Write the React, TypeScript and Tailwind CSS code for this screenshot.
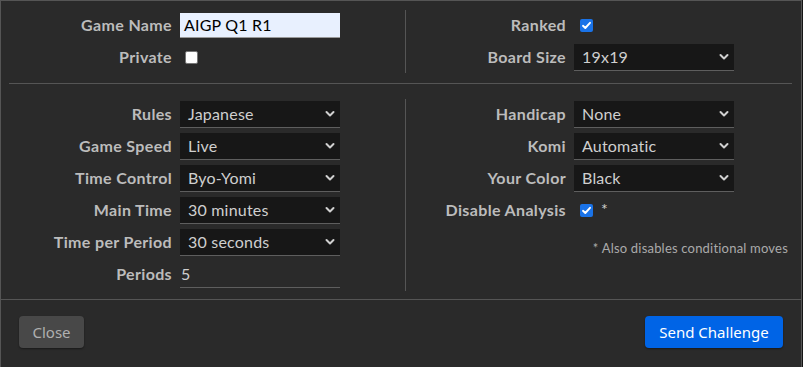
import React from "react";

const font = { fontFamily: "Lato, 'Noto Sans', sans-serif" };

function Chevron() {
  return (
    <svg width="10" height="7" viewBox="0 0 10 7" className="pointer-events-none absolute right-[5px] top-1/2 -translate-y-1/2">
      <path d="M1.5 1.5 L5 5 L8.5 1.5" fill="none" stroke="#d0d0d0" strokeWidth="2" strokeLinecap="round" strokeLinejoin="round" />
    </svg>
  );
}

function Select({ value }: { value: string }) {
  return (
    <div className="relative h-[27px] w-[160px] bg-[#171717] border-b border-[#5e5e5e] text-[16px] text-[#cfcfcf] pl-[8px] flex items-center tracking-[0.2px]">
      {value}
      <Chevron />
    </div>
  );
}

function Check({ checked }: { checked: boolean }) {
  if (!checked)
    return <div className="ml-[5px] w-[13px] h-[13px] rounded-[2px] bg-white border border-[#767676]" />;
  return (
    <div className="ml-[6px] w-[13px] h-[13px] rounded-[2px] bg-[#1a73e8] flex items-center justify-center">
      <svg width="11" height="11" viewBox="0 0 11 11">
        <path d="M2 5.8 L4.3 8 L9 2.8" fill="none" stroke="white" strokeWidth="1.9" strokeLinecap="round" strokeLinejoin="round" />
      </svg>
    </div>
  );
}

function Row({ label, lw, children }: { label: string; lw: string; children: React.ReactNode }) {
  return (
    <div className="h-[32px] flex items-center">
      <div className={`${lw} text-right font-bold text-[16px] text-[#bcbcbc] pr-[8px] whitespace-nowrap tracking-[0.35px]`}>{label}</div>
      {children}
    </div>
  );
}

export default function App() {
  return (
    <div className="w-[803px] h-[367px] bg-[#151515] overflow-hidden" style={font}>
      <div className="w-[802px] h-[367px] bg-[#2a2a2a] border-l border-t border-r border-[#555] flex flex-col">
        <div className="px-[8px] pt-[7px]">
          <div className="flex">
            <div className="w-[396px] py-[1px]">
              <Row label="Game Name" lw="w-[171px]">
                <div className="h-[25px] w-[160px] bg-[#e8f0fe] border-b border-[#999] text-[16px] text-black pl-[4px] flex items-center tracking-[0.2px]">AIGP Q1 R1</div>
              </Row>
              <Row label="Private" lw="w-[171px]">
                <Check checked={false} />
              </Row>
            </div>
            <div className="w-px bg-[#555] mt-[2px] mb-[1px]" />
            <div className="flex-1 py-[1px]">
              <Row label="Ranked" lw="w-[168px]">
                <Check checked={true} />
              </Row>
              <Row label="Board Size" lw="w-[168px]">
                <Select value="19x19" />
              </Row>
            </div>
          </div>
          <div className="h-px bg-[#555] mt-[9px] mr-[1px]" />
          <div className="flex mt-[14px]">
            <div className="w-[396px]">
              <Row label="Rules" lw="w-[171px]"><Select value="Japanese" /></Row>
              <Row label="Game Speed" lw="w-[171px]"><Select value="Live" /></Row>
              <Row label="Time Control" lw="w-[171px]"><Select value="Byo-Yomi" /></Row>
              <Row label="Main Time" lw="w-[171px]"><Select value="30 minutes" /></Row>
              <Row label="Time per Period" lw="w-[171px]"><Select value="30 seconds" /></Row>
              <Row label="Periods" lw="w-[171px]">
                <div className="h-[27px] w-[160px] border-b border-[#5e5e5e] text-[16px] text-[#cfcfcf] pl-[1px] flex items-center">5</div>
              </Row>
            </div>
            <div className="w-px bg-[#555] mt-[1px] mb-[-1px]" />
            <div className="flex-1">
              <Row label="Handicap" lw="w-[168px]"><Select value="None" /></Row>
              <Row label="Komi" lw="w-[168px]"><Select value="Automatic" /></Row>
              <Row label="Your Color" lw="w-[168px]"><Select value="Black" /></Row>
              <Row label="Disable Analysis" lw="w-[168px]">
                <Check checked={true} />
                <span className="ml-[8px] text-[16px] text-[#cfcfcf] -mt-[2px]">*</span>
              </Row>
              <div className="text-right text-[13px] text-[#aaaaaa] pr-[5px] mt-[13px] tracking-[0.2px]">* Also disables conditional moves</div>
            </div>
          </div>
        </div>
        <div className="h-px bg-[#555] mt-[9px]" />
        <div className="flex justify-between items-start px-[18px] pt-[16px]" style={{ fontFamily: "'Noto Sans', sans-serif" }}>
          <button className="h-[32px] w-[65px] rounded-[4px] bg-[#484848] text-[#b0b0b0] text-[15px] shadow-[0_1px_2px_rgba(0,0,0,0.4)]">Close</button>
          <button className="h-[32px] w-[138px] rounded-[4px] bg-[#0064e6] text-white text-[15px] shadow-[0_1px_2px_rgba(0,0,0,0.4)]">Send Challenge</button>
        </div>
      </div>
    </div>
  );
}
